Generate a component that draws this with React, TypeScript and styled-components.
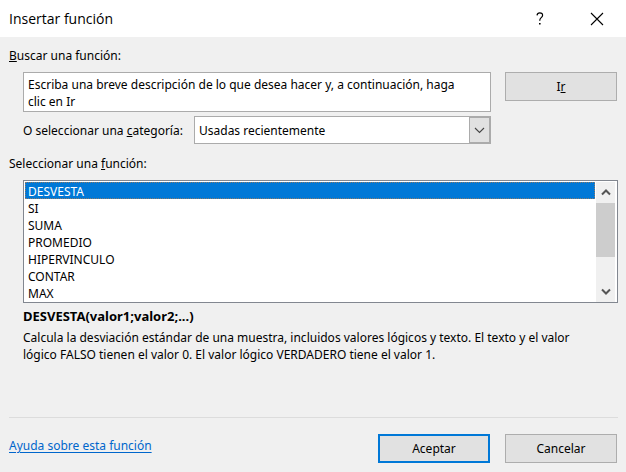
import React, { useState } from "react";
import styled, { createGlobalStyle } from "styled-components";

const GlobalStyle = createGlobalStyle`
  *, *::before, *::after { box-sizing: border-box; }
  body { margin: 0; background: #f0f0f0; }
  body, button, textarea, select {
    font-family: "Noto Sans", "Open Sans", sans-serif;
    font-size: 12px;
    line-height: 17px;
    color: #000;
  }
`;

const Dialog = styled.main`
  display: flex;
  flex-direction: column;
  min-height: 100vh;
  background: #f0f0f0;
`;

const TitleBar = styled.header`
  display: flex;
  align-items: center;
  height: 37px;
  padding: 0 9px;
  background: #fff;
`;

const Title = styled.h1`
  flex: 1;
  margin: 0;
  font-family: "Open Sans", "Noto Sans", sans-serif;
  font-size: 14px;
  font-weight: 400;
`;

const TitleButton = styled.button`
  display: flex;
  align-items: center;
  justify-content: center;
  width: 40px;
  height: 36px;
  margin-left: 17px;
  padding: 0;
  border: 0;
  background: transparent;
`;

const Body = styled.form`
  display: flex;
  flex: 1;
  flex-direction: column;
  padding: 10px 8px 9px 9px;
`;

const FieldLabel = styled.label`
  align-self: flex-start;
`;

const SearchRow = styled.div`
  display: flex;
  align-items: flex-start;
  gap: 14px;
  margin: 8px 1px 0 14px;
`;

const SearchFields = styled.div`
  display: flex;
  flex: 1;
  flex-direction: column;
  gap: 4px;
`;

const SearchBox = styled.textarea`
  display: block;
  width: 100%;
  height: 40px;
  padding: 3px 20px 3px 4px;
  border: 1px solid #ababab;
  border-radius: 0;
  background: #fff;
  overflow: hidden;
  resize: none;
`;

const CategoryRow = styled.div`
  display: flex;
  align-items: center;
  gap: 5px;
`;

const CategoryLabel = styled.label`
  width: 166px;
`;

const SelectFrame = styled.div`
  display: flex;
  flex: 1;
  height: 28px;
  border: 1px solid #ababab;
  background: #fff;
`;

const CategorySelect = styled.select`
  flex: 1;
  min-width: 0;
  padding: 0 4px;
  border: 0;
  border-radius: 0;
  background: transparent;
  appearance: none;
`;

const SelectArrow = styled.span`
  display: flex;
  align-items: center;
  justify-content: center;
  width: 21px;
  border: 1px solid #ababab;
  background: #e1e1e1;
`;

const PushButton = styled.button<{ $primary?: boolean }>`
  width: 112px;
  height: 29px;
  padding: 0;
  border: ${(p) => (p.$primary ? "2px solid #0078d7" : "1px solid #adadad")};
  border-radius: 0;
  background: #e1e1e1;
`;

const ListLabel = styled(FieldLabel)`
  margin-top: 11px;
`;

const ListFrame = styled.div`
  display: flex;
  height: 123px;
  margin: 8px 0 0 14px;
  padding: 1px 2px 0 1px;
  border: 1px solid #828790;
  background: #fff;
`;

const FunctionList = styled.select`
  flex: 1;
  min-width: 0;
  height: 119px;
  padding: 0;
  border: 0;
  border-radius: 0;
  outline: 0;
  background: #fff;
  overflow: hidden;
  scrollbar-width: none;
`;

const FunctionOption = styled.option`
  height: 17px;
  min-height: 17px;
  padding: 1px 3px 0;
  line-height: 17px;
  color: #000;

  &:checked {
    outline: 1px dotted #8a7a6a;
    outline-offset: -1px;
    background: linear-gradient(#0078d7, #0078d7);
    color: #fff;
    -webkit-text-fill-color: #fff;
  }
`;

const ScrollBar = styled.div`
  display: flex;
  flex-direction: column;
  width: 19px;
  margin-left: 1px;
  background: #f0f0f0;
`;

const ScrollButton = styled.button`
  display: flex;
  align-items: center;
  justify-content: center;
  height: 21px;
  padding: 0;
  border: 0;
  background: transparent;
`;

const ScrollTrack = styled.div`
  flex: 1;
`;

const ScrollThumb = styled.div`
  height: 54px;
  background: #cdcdcd;
`;

const Summary = styled.section`
  margin: 5px 16px 0 14px;
`;

const Signature = styled.h2`
  margin: 0;
  font-size: 13px;
  line-height: 17px;
  font-weight: 700;
`;

const Description = styled.p`
  margin: 4px 0 0;
`;

const Footer = styled.footer`
  display: flex;
  align-items: center;
  gap: 15px;
  margin-top: auto;
  padding: 16px 1px 0 0;
  border-top: 1px solid #dcdcdc;
`;

const HelpLink = styled.a`
  margin: 0 auto 6px 0;
  color: #0066cc;
  text-underline-offset: 2px;
`;

const FUNCTIONS = ["DESVESTA", "SI", "SUMA", "PROMEDIO", "HIPERVINCULO", "CONTAR", "MAX"];

function Chevron({ up = false }: { up?: boolean }) {
  return (
    <svg width="10" height="7" viewBox="0 0 10 7" aria-hidden="true">
      <path d={up ? "M1 5.5 5 1.5 9 5.5" : "M1 1.5 5 5.5 9 1.5"} fill="none" stroke="#555" strokeWidth="2" />
    </svg>
  );
}

export default function App() {
  const [selected, setSelected] = useState("DESVESTA");

  return (
    <Dialog>
      <GlobalStyle />
      <TitleBar>
        <Title>Insertar función</Title>
        <TitleButton type="button" aria-label="Ayuda">
          <svg width="8" height="13" viewBox="0 0 8 13" aria-hidden="true">
            <path d="M1 3.4C1.2 1.7 2.2.8 3.8.8c1.7 0 2.8.9 2.8 2.4 0 2.3-2.8 2.6-2.8 5v.6" fill="none" stroke="#000" strokeWidth="1.2" />
            <path d="M3 11h1.6v1.5H3z" fill="#000" />
          </svg>
        </TitleButton>
        <TitleButton type="button" aria-label="Cerrar">
          <svg width="14" height="14" viewBox="0 0 14 14" aria-hidden="true">
            <path d="M1 1l12 12M13 1 1 13" fill="none" stroke="#000" strokeWidth="1.1" />
          </svg>
        </TitleButton>
      </TitleBar>

      <Body onSubmit={(e) => e.preventDefault()}>
        <FieldLabel htmlFor="search">
          <u>B</u>uscar una función:
        </FieldLabel>
        <SearchRow>
          <SearchFields>
            <SearchBox
              id="search"
              spellCheck={false}
              defaultValue="Escriba una breve descripción de lo que desea hacer y, a continuación, haga clic en Ir"
            />
            <CategoryRow>
              <CategoryLabel htmlFor="category">
                O seleccionar una <u>c</u>ategoría:
              </CategoryLabel>
              <SelectFrame>
                <CategorySelect id="category" defaultValue="recent">
                  <option value="recent">Usadas recientemente</option>
                </CategorySelect>
                <SelectArrow>
                  <svg width="11" height="7" viewBox="0 0 11 7" aria-hidden="true">
                    <path d="M1 1l4.5 4.5L10 1" fill="none" stroke="#444" strokeWidth="1.1" />
                  </svg>
                </SelectArrow>
              </SelectFrame>
            </CategoryRow>
          </SearchFields>
          <PushButton type="button">
            I<u>r</u>
          </PushButton>
        </SearchRow>

        <ListLabel htmlFor="functions">
          Seleccionar una <u>f</u>unción:
        </ListLabel>
        <ListFrame>
          <FunctionList id="functions" size={7} value={selected} onChange={(e) => setSelected(e.target.value)}>
            {FUNCTIONS.map((name) => (
              <FunctionOption key={name} value={name}>
                {name}
              </FunctionOption>
            ))}
          </FunctionList>
          <ScrollBar>
            <ScrollButton type="button" aria-label="Subir">
              <Chevron up />
            </ScrollButton>
            <ScrollTrack>
              <ScrollThumb />
            </ScrollTrack>
            <ScrollButton type="button" aria-label="Bajar">
              <Chevron />
            </ScrollButton>
          </ScrollBar>
        </ListFrame>

        <Summary>
          <Signature>DESVESTA(valor1;valor2;...)</Signature>
          <Description>
            Calcula la desviación estándar de una muestra, incluidos valores lógicos y texto. El texto y el valor
            lógico FALSO tienen el valor 0. El valor lógico VERDADERO tiene el valor 1.
          </Description>
        </Summary>

        <Footer>
          <HelpLink href="#ayuda">Ayuda sobre esta función</HelpLink>
          <PushButton type="submit" $primary>
            Aceptar
          </PushButton>
          <PushButton type="button">Cancelar</PushButton>
        </Footer>
      </Body>
    </Dialog>
  );
}
